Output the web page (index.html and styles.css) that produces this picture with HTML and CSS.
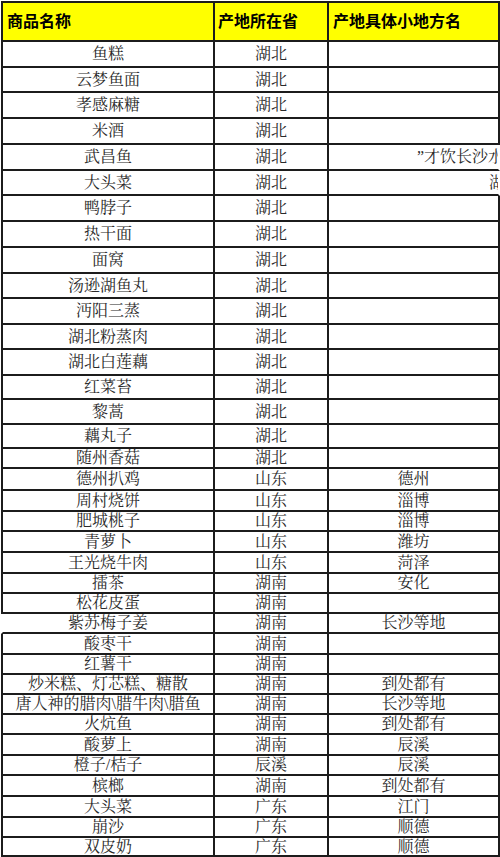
FILE: index.html
```html
<!DOCTYPE html>
<html lang="zh-CN">
<head>
<meta charset="utf-8">
<title>商品产地表</title>
<link rel="stylesheet" href="styles.css">
</head>
<body>
<div class="sheet">
  <div class="hd c1">商品名称</div><div class="hd c2">产地所在省</div><div class="hd c3">产地具体小地方名</div>
  <div class="c1">鱼糕</div><div class="c2">湖北</div><div class="c3"></div>
  <div class="c1">云梦鱼面</div><div class="c2">湖北</div><div class="c3"></div>
  <div class="c1">孝感麻糖</div><div class="c2">湖北</div><div class="c3"></div>
  <div class="c1">米酒</div><div class="c2">湖北</div><div class="c3"></div>
  <div class="c1">武昌鱼</div><div class="c2">湖北</div><div class="c3 spill s1">”才饮长沙水，又食武昌鱼</div>
  <div class="c1">大头菜</div><div class="c2">湖北</div><div class="c3 spill s2">湖北</div>
  <div class="c1">鸭脖子</div><div class="c2">湖北</div><div class="c3"></div>
  <div class="c1">热干面</div><div class="c2">湖北</div><div class="c3"></div>
  <div class="c1">面窝</div><div class="c2">湖北</div><div class="c3"></div>
  <div class="c1">汤逊湖鱼丸</div><div class="c2">湖北</div><div class="c3"></div>
  <div class="c1">沔阳三蒸</div><div class="c2">湖北</div><div class="c3"></div>
  <div class="c1">湖北粉蒸肉</div><div class="c2">湖北</div><div class="c3"></div>
  <div class="c1">湖北白莲藕</div><div class="c2">湖北</div><div class="c3"></div>
  <div class="c1">红菜苔</div><div class="c2">湖北</div><div class="c3"></div>
  <div class="c1">黎蒿</div><div class="c2">湖北</div><div class="c3"></div>
  <div class="c1">藕丸子</div><div class="c2">湖北</div><div class="c3"></div>
  <div class="c1">随州香菇</div><div class="c2">湖北</div><div class="c3"></div>
  <div class="c1">德州扒鸡</div><div class="c2">山东</div><div class="c3">德州</div>
  <div class="c1">周村烧饼</div><div class="c2">山东</div><div class="c3">淄博</div>
  <div class="c1">肥城桃子</div><div class="c2">山东</div><div class="c3">淄博</div>
  <div class="c1">青萝卜</div><div class="c2">山东</div><div class="c3">潍坊</div>
  <div class="c1">王光烧牛肉</div><div class="c2">山东</div><div class="c3">菏泽</div>
  <div class="c1">擂茶</div><div class="c2">湖南</div><div class="c3">安化</div>
  <div class="c1">松花皮蛋</div><div class="c2">湖南</div><div class="c3"></div>
  <div class="c1 nol">紫苏梅子姜</div><div class="c2">湖南</div><div class="c3">长沙等地</div>
  <div class="c1">酸枣干</div><div class="c2">湖南</div><div class="c3"></div>
  <div class="c1">红薯干</div><div class="c2">湖南</div><div class="c3"></div>
  <div class="c1">炒米糕、灯芯糕、糖散</div><div class="c2">湖南</div><div class="c3">到处都有</div>
  <div class="c1">唐人神的腊肉\腊牛肉\腊鱼</div><div class="c2">湖南</div><div class="c3">长沙等地</div>
  <div class="c1">火炕鱼</div><div class="c2">湖南</div><div class="c3">到处都有</div>
  <div class="c1">酸萝上</div><div class="c2">湖南</div><div class="c3">辰溪</div>
  <div class="c1">橙子/桔子</div><div class="c2">辰溪</div><div class="c3">辰溪</div>
  <div class="c1">槟榔</div><div class="c2">湖南</div><div class="c3">到处都有</div>
  <div class="c1">大头菜</div><div class="c2">广东</div><div class="c3">江门</div>
  <div class="c1">崩沙</div><div class="c2">广东</div><div class="c3">顺德</div>
  <div class="c1">双皮奶</div><div class="c2">广东</div><div class="c3">顺德</div>
</div>
</body>
</html>
```
FILE: styles.css
```css
html, body {
  margin: 0;
  background: #fff;
}
body {
  width: 500px;
  height: 857px;
  overflow: hidden;
  padding: 1px 0 0 1px;
  box-sizing: border-box;
  font-family: "Liberation Serif", "Noto Serif CJK SC", "Noto Sans CJK SC", serif;
  font-size: 16px;
  color: #2a2a2a;
}
.sheet {
  display: grid;
  grid-template-columns: 214px 114px 171px;
  grid-template-rows:
    39px
    26px 25px 26px 26px 26px 25px 26px 26px 26px 25px 26px 25px 26px 24px 25px 24px
    20px 22px 21px 20px 21px 21px 20px 20px 20px 21px 20px 20px 20px 20px 21px 20px 21px 21px 20px 19px;
  border-top: 2px solid #1c1c1c;
  width: 499px;
}
.sheet > div {
  box-sizing: border-box;
  border-right: 2px solid #1c1c1c;
  border-bottom: 2px solid #1c1c1c;
  display: flex;
  align-items: center;
  justify-content: center;
  line-height: 1;
  white-space: nowrap;
  background: #fff;
}
.sheet > .c1 {
  border-left: 2px solid #1c1c1c;
}
.sheet > .c1.nol {
  border-left-color: transparent;
}
.sheet > .hd {
  background: #ffff00;
  justify-content: flex-start;
  padding-left: 4px;
  font-family: "Liberation Sans", "Noto Sans CJK SC", sans-serif;
  font-weight: 700;
  font-size: 16px;
  color: #000;
}
.sheet > .c2.hd {
  padding-left: 3px;
}
.sheet > .spill {
  justify-content: flex-start;
  border-right-color: transparent;
  overflow: hidden;
}
.sheet > .s1 {
  padding-left: 88px;
}
.sheet > .s2 {
  padding-left: 160px;
}
```
